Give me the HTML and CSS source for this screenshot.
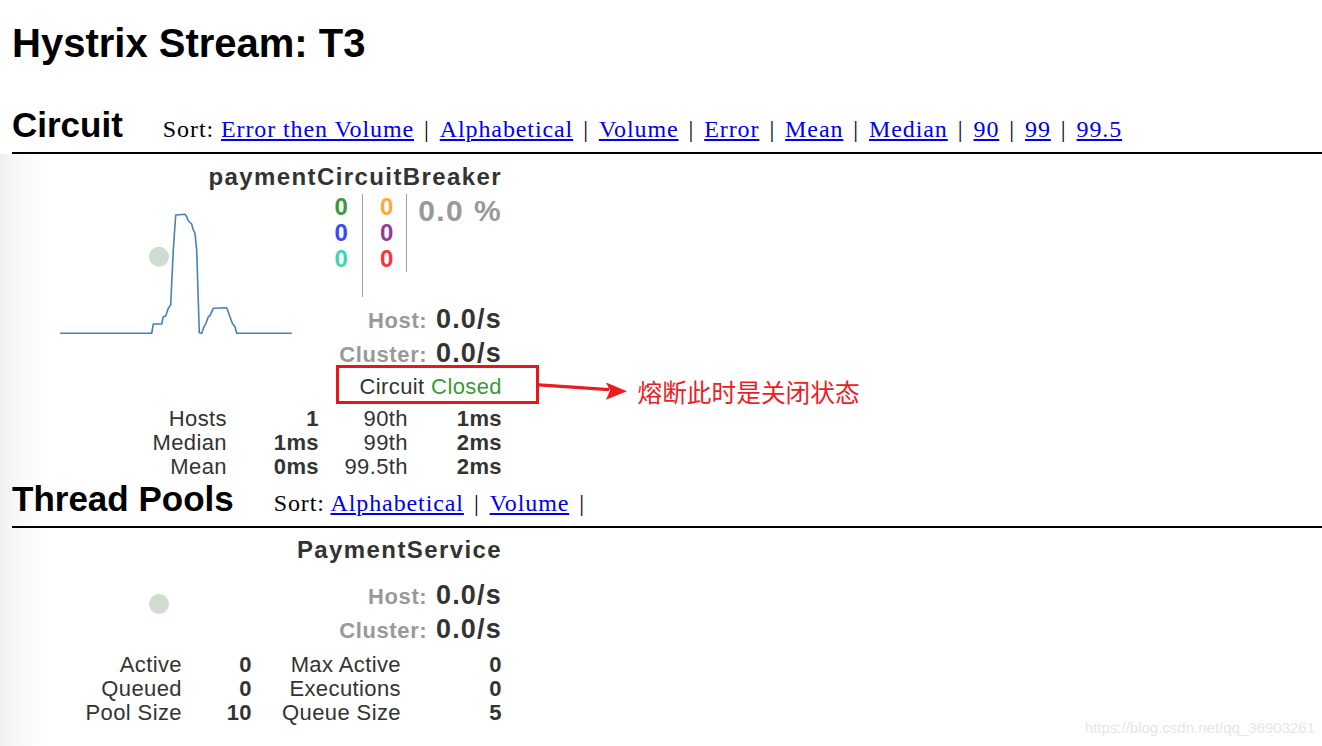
FILE: index.html
```html
<!DOCTYPE html>
<html lang="en">
<head>
<meta charset="utf-8">
<title>Hystrix Stream: T3</title>
<link rel="stylesheet" href="styles.css">
</head>
<body>
<div class="page">
  <h1 class="title">Hystrix Stream: T3</h1>

  <div class="sec-head first">
    <h2>Circuit</h2>
    <div class="sort"><span class="sort-lbl">Sort:</span> <a href="#">Error then Volume</a><span class="sep">|</span><a href="#">Alphabetical</a><span class="sep">|</span><a href="#">Volume</a><span class="sep">|</span><a href="#">Error</a><span class="sep">|</span><a href="#">Mean</a><span class="sep">|</span><a href="#">Median</a><span class="sep">|</span><a href="#">90</a><span class="sep">|</span><a href="#">99</a><span class="sep">|</span><a href="#">99.5</a></div>
  </div>

  <div class="band">
    <div class="monitor circuit">
      <div class="mname">paymentCircuitBreaker</div>
      <div class="mrow">
        <div class="chart">
          <svg width="300" height="150" viewBox="0 0 300 150">
            <circle cx="159" cy="62.7" r="10" fill="#cfdccf"/>
            <polyline fill="none" stroke="#4682b4" stroke-width="1.6" stroke-linejoin="round" points="60,139.3 151.7,139.3 153.3,130 161.7,130 163.3,122.7 165.7,122 168.3,114.3 170.7,111 173.3,56 175.7,21 185,20.3 186.7,22.7 188.3,26.7 191.7,30 192.7,34.3 195,39.3 196.7,56 199.3,138.7 201.7,139.3 204,132.7 206,129.3 208.3,122.7 210,121.7 213.3,114.3 226.7,113.7 229.3,121 232.3,129.3 235,132.7 236.7,139.3 291.7,139.3"/>
          </svg>
        </div>
        <div class="mright">
          <div class="counters">
            <div class="ccol c1"><span class="green">0</span><span class="blue">0</span><span class="teal">0</span></div>
            <div class="ccol c2"><span class="orange">0</span><span class="purple">0</span><span class="red">0</span></div>
            <div class="pct">0.0 %</div>
          </div>
          <div class="rate"><span class="lbl">Host:</span> 0.0/s</div>
          <div class="rate"><span class="lbl">Cluster:</span> 0.0/s</div>
          <div class="status">Circuit <span class="closed">Closed</span>
            <div class="annot-box"></div>
            <svg class="annot-arrow" width="90" height="22" viewBox="0 0 90 22">
              <line x1="0" y1="4.8" x2="70" y2="9.6" stroke="#ea1b22" stroke-width="3.2"/>
              <polygon points="67,2.4 88,11.2 67,19.8 71,10.6" fill="#ea1b22"/>
            </svg>
            <span class="annot-text">熔断此时是关闭状态</span>
          </div>
        </div>
      </div>
      <div class="stats c-stats">
        <div>Hosts</div><div class="v">1</div><div>90th</div><div class="v">1ms</div>
        <div>Median</div><div class="v">1ms</div><div>99th</div><div class="v">2ms</div>
        <div>Mean</div><div class="v">0ms</div><div>99.5th</div><div class="v">2ms</div>
      </div>
    </div>

    <div class="sec-head">
      <h2>Thread Pools</h2>
      <div class="sort"><span class="sort-lbl">Sort:</span> <a href="#">Alphabetical</a><span class="sep">|</span><a href="#">Volume</a><span class="sep">|</span></div>
    </div>

    <div class="monitor tp">
      <div class="mname">PaymentService</div>
      <div class="mrow">
        <div class="chart">
          <svg width="300" height="60" viewBox="0 0 300 60">
            <circle cx="159" cy="26" r="10" fill="#cfdccf"/>
          </svg>
        </div>
        <div class="mright">
          <div class="rate"><span class="lbl">Host:</span> 0.0/s</div>
          <div class="rate"><span class="lbl">Cluster:</span> 0.0/s</div>
        </div>
      </div>
      <div class="stats t-stats">
        <div>Active</div><div class="v">0</div><div>Max Active</div><div class="v">0</div>
        <div>Queued</div><div class="v">0</div><div>Executions</div><div class="v">0</div>
        <div>Pool Size</div><div class="v">10</div><div>Queue Size</div><div class="v">5</div>
      </div>
    </div>
  </div>

  <div class="watermark">https://blog.csdn.net/qq_36903261</div>
</div>
</body>
</html>
```

FILE: styles.css
```css
html, body {
  margin: 0;
  padding: 0;
  background: #fff;
}

body {
  font-family: "Liberation Sans", Arial, Helvetica, sans-serif;
  color: #000;
  overflow: hidden;
}

.page {
  position: relative;
  display: flex;
  flex-direction: column;
  min-height: 746px;
}

.title {
  margin: 20px 0 0 12px;
  font-size: 40px;
  line-height: 46px;
  font-weight: bold;
}

.sec-head {
  display: flex;
  align-items: baseline;
  gap: 40px;
  margin-left: 12px;
  padding-bottom: 7px;
  border-bottom: 2px solid #000;
}

.sec-head.first {
  margin-top: 39px;
}

.sec-head h2 {
  margin: 0;
  font-size: 35px;
  line-height: 40px;
  font-weight: bold;
}

.sort {
  font-family: "Liberation Serif", "Times New Roman", serif;
  font-size: 24px;
  letter-spacing: 0.9px;
  color: #000;
  white-space: nowrap;
}

.sort-lbl {
  margin-right: 0;
}

.sort a {
  color: #0000ee;
  text-decoration: underline;
  text-decoration-thickness: 1.5px;
  text-underline-offset: 2px;
}

.sep {
  margin: 0 10px;
}

.band {
  flex: 1;
  background: linear-gradient(to right, #f0f0f0 0, #f8f8f8 18px, #fff 45px);
}

.monitor {
  width: 502px;
  color: #333;
}

.circuit {
  padding-top: 9px;
}

.tp {
  padding-top: 8px;
}

.mname {
  font-size: 24px;
  line-height: 28px;
  font-weight: bold;
  letter-spacing: 1.4px;
  text-align: right;
}

.mrow {
  display: flex;
}

.circuit .mrow {
  margin-top: 3px;
}

.tp .mrow {
  margin-top: 14px;
}

.chart {
  flex: 1;
}

.chart svg {
  display: block;
  overflow: visible;
}

.mright {
  display: flex;
  flex-direction: column;
  align-items: flex-end;
}

.counters {
  display: flex;
  align-items: flex-start;
  margin-bottom: 5px;
  font-size: 24px;
  line-height: 26px;
  font-weight: bold;
}

.ccol {
  display: flex;
  flex-direction: column;
  align-items: flex-end;
  border-right: 1px solid #a0a0a0;
}

.c1 {
  height: 103px;
  padding-right: 14px;
}

.c2 {
  height: 78px;
  padding: 0 13px 0 17px;
}

.green { color: #3a993a; }
.blue { color: #3b47fb; }
.teal { color: #43d3ae; }
.orange { color: #ffa73c; }
.purple { color: #953a98; }
.red { color: #ff3040; }

.pct {
  padding-left: 11px;
  font-size: 30px;
  line-height: 34px;
  letter-spacing: 1.4px;
  color: #999;
}

.rate {
  font-size: 27px;
  line-height: 34px;
  font-weight: bold;
  letter-spacing: 1.2px;
  color: #333;
  white-space: nowrap;
}

.rate .lbl {
  font-size: 22px;
  line-height: 22px;
  letter-spacing: 0.6px;
  color: #999;
}

.status {
  position: relative;
  font-size: 22px;
  line-height: 34px;
  letter-spacing: 0.4px;
  color: #333;
  white-space: nowrap;
}

.closed {
  color: #3a993a;
}

.annot-box {
  position: absolute;
  left: -23px;
  top: -5px;
  width: 203px;
  height: 39px;
  box-sizing: border-box;
  border: 3px solid #e8151b;
}

.annot-arrow {
  position: absolute;
  left: 180px;
  top: 10px;
}

.annot-text {
  position: absolute;
  left: 278px;
  top: 6px;
  font-family: "Noto Sans CJK SC", sans-serif;
  font-size: 24.7px;
  line-height: 30px;
  letter-spacing: 0;
  color: #ee1c24;
}

.stats {
  display: grid;
  font-size: 22px;
  line-height: 24px;
  letter-spacing: 0.4px;
  text-align: right;
  color: #333;
  white-space: nowrap;
}

.stats .v {
  font-weight: bold;
}

.c-stats {
  grid-template-columns: 227px 92px 89px 94px;
  margin-top: 3px;
}

.t-stats {
  grid-template-columns: 182px 70px 149px 101px;
  margin-top: 7px;
}

.watermark {
  position: absolute;
  right: 7px;
  top: 719px;
  font-size: 15px;
  line-height: 18px;
  color: #e6e6e6;
}
```
